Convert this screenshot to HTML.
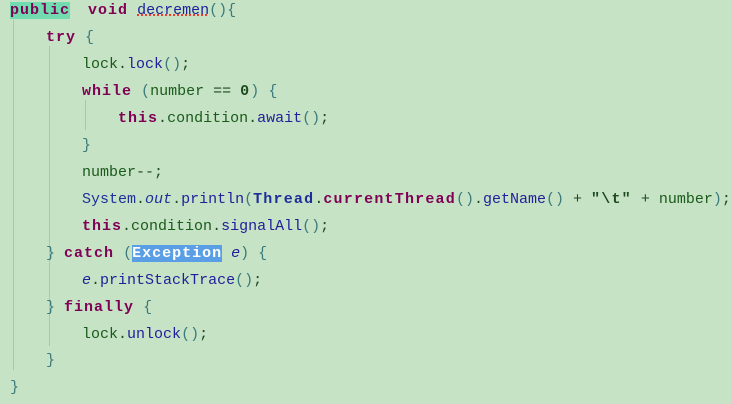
<!DOCTYPE html>
<html><head><meta charset="utf-8"><style>
body{margin:0;width:731px;height:404px;background:#c7e3c6;overflow:hidden;position:relative;font-family:"Liberation Mono",monospace;font-size:15px;}
.l{position:absolute;left:10px;white-space:pre;height:27px;line-height:27px;color:#1f4a1f;}
.k{color:#7f0055;font-weight:bold;letter-spacing:1px}
b{letter-spacing:1.2px}
.m{color:#20209a}
.f{color:#1a5a1a}
.p{color:#3a7a7a}
.c{color:#1e2f9a}
.b{color:#7f0055}
.g{position:absolute;width:1px;background:#f09ad8}
.sel{background:#5a9ee6;color:#fff;font-weight:bold;letter-spacing:1px}
</style></head><body>
<div class="g" style="left:13px;top:20px;height:350px"></div>
<div class="g" style="left:49px;top:46px;height:298px"></div>
<div class="g" style="left:85px;top:100px;height:30px"></div>
<div class="g" style="left:49px;top:316px;height:30px"></div>
<div class="l" style="top:-3px"><span class="k" style="background:#72dcb0">public</span>  <span class="k">void</span> <span class="m" style="text-decoration:underline dotted red">decremen</span><span class="p">(){</span></div>
<div class="l" style="top:24px">    <span class="k">try</span> <span class="p">{</span></div>
<div class="l" style="top:51px">        <span class="f">lock</span>.<span class="m">lock</span><span class="p">()</span>;</div>
<div class="l" style="top:78px">        <span class="k">while</span> <span class="p">(</span><span class="f">number</span> == <b>0</b><span class="p">)</span> <span class="p">{</span></div>
<div class="l" style="top:105px">            <span class="k">this</span>.<span class="f">condition</span>.<span class="m">await</span><span class="p">()</span>;</div>
<div class="l" style="top:132px">        <span class="p">}</span></div>
<div class="l" style="top:159px">        <span class="f">number</span>--;</div>
<div class="l" style="top:186px">        <span class="c">System</span>.<i class="c">out</i>.<span class="m">println</span><span class="p">(</span><b class="c">Thread</b>.<b class="b">currentThread</b><span class="p">()</span>.<span class="m">getName</span><span class="p">()</span> + <b>"\t"</b> + <span class="f">number</span><span class="p">)</span>;</div>
<div class="l" style="top:213px">        <span class="k">this</span>.<span class="f">condition</span>.<span class="m">signalAll</span><span class="p">()</span>;</div>
<div class="l" style="top:240px">    <span class="p">}</span> <span class="k">catch</span> <span class="p">(</span><span class="sel">Exception</span> <i class="m">e</i><span class="p">)</span> <span class="p">{</span></div>
<div class="l" style="top:267px">        <i class="m">e</i>.<span class="m">printStackTrace</span><span class="p">()</span>;</div>
<div class="l" style="top:294px">    <span class="p">}</span> <span class="k">finally</span> <span class="p">{</span></div>
<div class="l" style="top:321px">        <span class="f">lock</span>.<span class="m">unlock</span><span class="p">()</span>;</div>
<div class="l" style="top:347px">    <span class="p">}</span></div>
<div class="l" style="top:374px"><span class="p">}</span></div>
</body></html>
